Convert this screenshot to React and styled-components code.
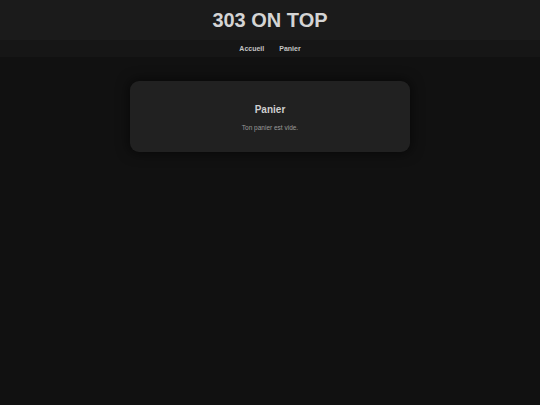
import styled, { createGlobalStyle } from "styled-components";

const Global = createGlobalStyle`
  html, body {
    margin: 0;
    padding: 0;
    background: #111111;
    color: #dddddd;
    font-family: "Liberation Sans", Arial, sans-serif;
  }
  body {
    min-height: 405px;
  }
`;

const Header = styled.header`
  height: 40px;
  background: #1b1b1b;
  display: flex;
  align-items: center;
  justify-content: center;
`;

const Title = styled.h1`
  margin: 0;
  font-size: 20px;
  font-weight: bold;
  color: #d4d4d4;
`;

const Nav = styled.nav`
  height: 17px;
  background: #161616;
  display: flex;
  align-items: center;
  justify-content: center;
  gap: 15px;
`;

const NavLink = styled.a`
  font-size: 7px;
  font-weight: bold;
  color: #c4c4c4;
  text-decoration: none;
  &:visited {
    color: #c4c4c4;
  }
`;

const Main = styled.main`
  display: flex;
  justify-content: center;
  padding-top: 24px;
`;

const Card = styled.section`
  width: 280px;
  height: 71px;
  box-sizing: border-box;
  background: #212121;
  border-radius: 9px;
  box-shadow: 0 0 12px 2px rgba(0, 0, 0, 0.5);
  display: flex;
  flex-direction: column;
  align-items: center;
  padding-top: 23px;
`;

const CardTitle = styled.h2`
  margin: 0;
  font-size: 10px;
  font-weight: bold;
  color: #cfcfcf;
`;

const CardText = styled.p`
  margin: 9px 0 0;
  font-size: 6.5px;
  color: #9a9a9a;
`;

export default function App() {
  return (
    <>
      <Global />
      <Header>
        <Title>303 ON TOP</Title>
      </Header>
      <Nav>
        <NavLink href="#">Accueil</NavLink>
        <NavLink href="#">Panier</NavLink>
      </Nav>
      <Main>
        <Card>
          <CardTitle>Panier</CardTitle>
          <CardText>Ton panier est vide.</CardText>
        </Card>
      </Main>
    </>
  );
}
